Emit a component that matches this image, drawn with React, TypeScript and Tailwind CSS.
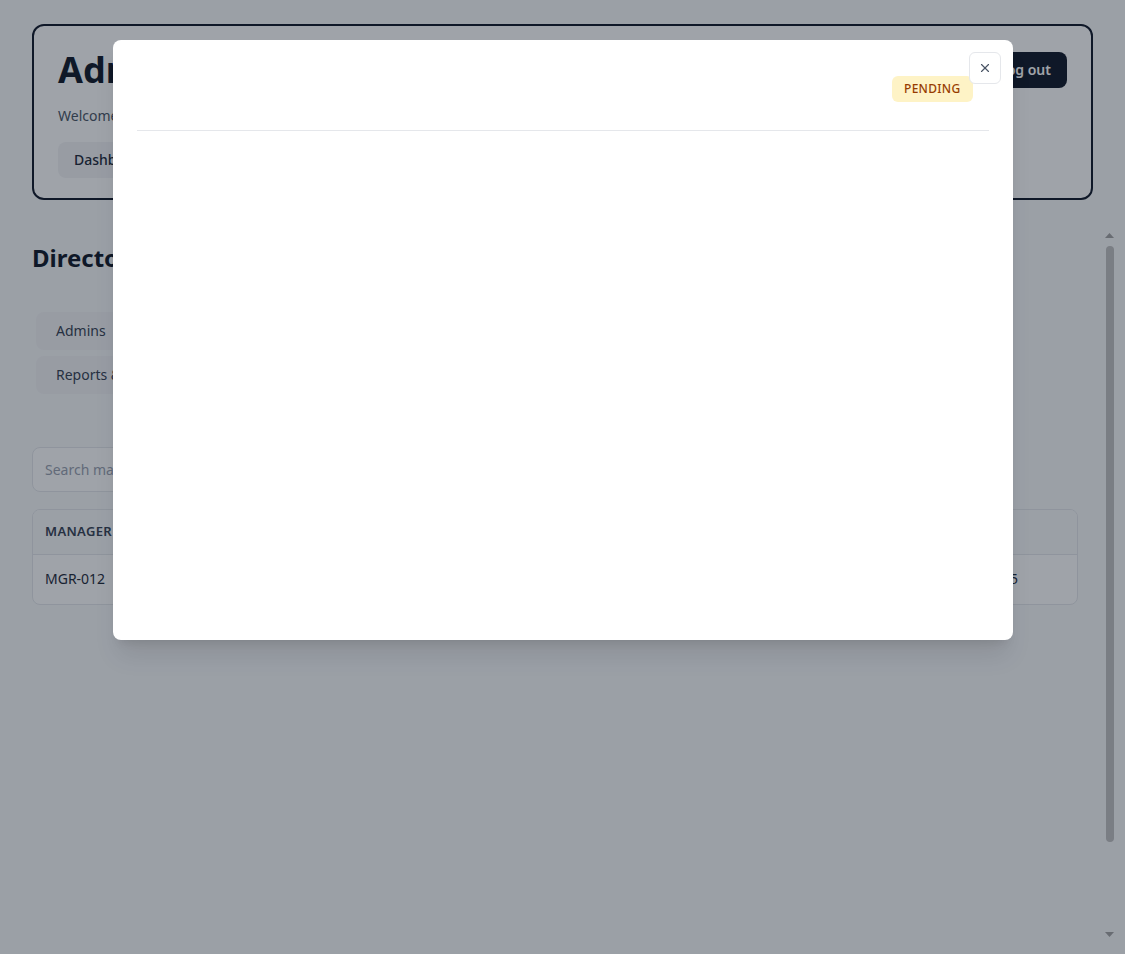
import React from 'react';
import { X } from 'lucide-react';

const tabs = ['Admins', 'Managers', 'Employees', 'Reports & Analytics', 'Settings', 'Audit Log'];

const columns = [
  { label: 'Manager ID', w: 'w-[150px]' },
  { label: 'Name', w: 'w-[220px]' },
  { label: 'Email', w: 'w-[300px]' },
  { label: 'Status', w: 'w-[230px]' },
  { label: 'Created', w: '' },
];

const row = ['MGR-012', 'Daniel Okafor', 'daniel.okafor@company.com', 'Pending', '2025-01-15'];

// Classic scrollbar drawn as its own column next to the content
const Scrollbar = () => (
  <div className="w-[15px] shrink-0 flex flex-col">
    <div className="h-[15px] flex items-center justify-center">
      <svg width="9" height="5" viewBox="0 0 9 5">
        <polygon points="4.5,0 9,5 0,5" fill="#a3a3a3" />
      </svg>
    </div>
    <div className="flex-1 pt-[3px]">
      <div className="mx-auto w-2 h-[596px] rounded-full bg-[#c1c1c1]" />
    </div>
    <div className="h-[15px] flex items-center justify-center">
      <svg width="9" height="5" viewBox="0 0 9 5">
        <polygon points="0,0 9,0 4.5,5" fill="#a3a3a3" />
      </svg>
    </div>
  </div>
);

const App = () => {
  return (
    <div
      className="h-screen flex flex-col pt-6 pb-3 bg-gray-50 text-gray-900"
      style={{ fontFamily: '"Noto Sans", "Open Sans", sans-serif' }}
    >
      {/* Header card */}
      <header className="mx-8 border-2 border-gray-900 rounded-xl bg-white px-6 pt-6 pb-5">
        <div className="flex items-start justify-between">
          <h1 className="text-4xl font-bold text-gray-900">Admin Dashboard</h1>
          <button className="mt-0.5 h-9 px-4 rounded-lg bg-gray-900 text-white text-sm font-semibold">
            Log out
          </button>
        </div>
        <p className="mt-4 text-sm text-gray-600">Welcome back, Administrator</p>
        <div className="mt-4 flex gap-2">
          <button className="h-9 px-4 rounded-lg bg-gray-100 text-sm font-medium text-gray-800">
            Dashboard
          </button>
          <button className="h-9 px-4 rounded-lg bg-gray-100 text-sm font-medium text-gray-800">
            Users
          </button>
        </div>
      </header>

      {/* Scrollable content */}
      <main className="mt-7 flex-1 min-h-0 flex ml-8 mr-2">
        <div className="flex-1 min-w-0 overflow-hidden pr-6 pt-3.5">
          <h2 className="text-2xl font-bold text-gray-900">Directory</h2>

          <div className="mt-[34px] grid grid-cols-3 gap-1.5 p-1 max-w-3xl">
            {tabs.map((t) => (
              <button
                key={t}
                className="h-[38px] px-5 text-left rounded-lg bg-gray-100 text-sm text-gray-700"
              >
                {t}
              </button>
            ))}
          </div>

          <input
            className="mt-[49px] block w-full max-w-md h-[45px] px-3 rounded-lg border border-gray-200 bg-white text-sm placeholder:text-gray-400"
            placeholder="Search managers..."
          />

          <div className="mt-[17px] border border-gray-200 rounded-lg bg-white overflow-hidden">
            <table className="w-full table-fixed text-sm">
              <thead className="bg-gray-50">
                <tr className="border-b border-gray-200">
                  {columns.map((c) => (
                    <th
                      key={c.label}
                      className={`${c.w} h-11 px-3 text-left text-[13px] font-semibold uppercase tracking-wide text-gray-700`}
                    >
                      {c.label}
                    </th>
                  ))}
                </tr>
              </thead>
              <tbody>
                <tr>
                  {row.map((v, i) => (
                    <td key={i} className="h-[50px] px-3 text-gray-800">
                      {v}
                    </td>
                  ))}
                </tr>
              </tbody>
            </table>
          </div>
        </div>
        <Scrollbar />
      </main>

      {/* Modal */}
      <div className="fixed inset-0 bg-gray-900/40 flex justify-center items-start pt-10">
        <div className="relative w-[900px] h-[600px] bg-white rounded-lg shadow-xl">
          <button className="absolute top-3 right-3 w-8 h-8 flex items-center justify-center rounded-md border border-gray-200 bg-white text-gray-600">
            <X size={14} />
          </button>
          <div className="mx-6 pt-9 pb-7 border-b border-gray-200 flex justify-end">
            <span className="mr-4 px-3 py-[5px] rounded-md bg-amber-100 text-amber-800 text-xs font-medium tracking-wide">
              PENDING
            </span>
          </div>
        </div>
      </div>
    </div>
  );
};

export default App;
